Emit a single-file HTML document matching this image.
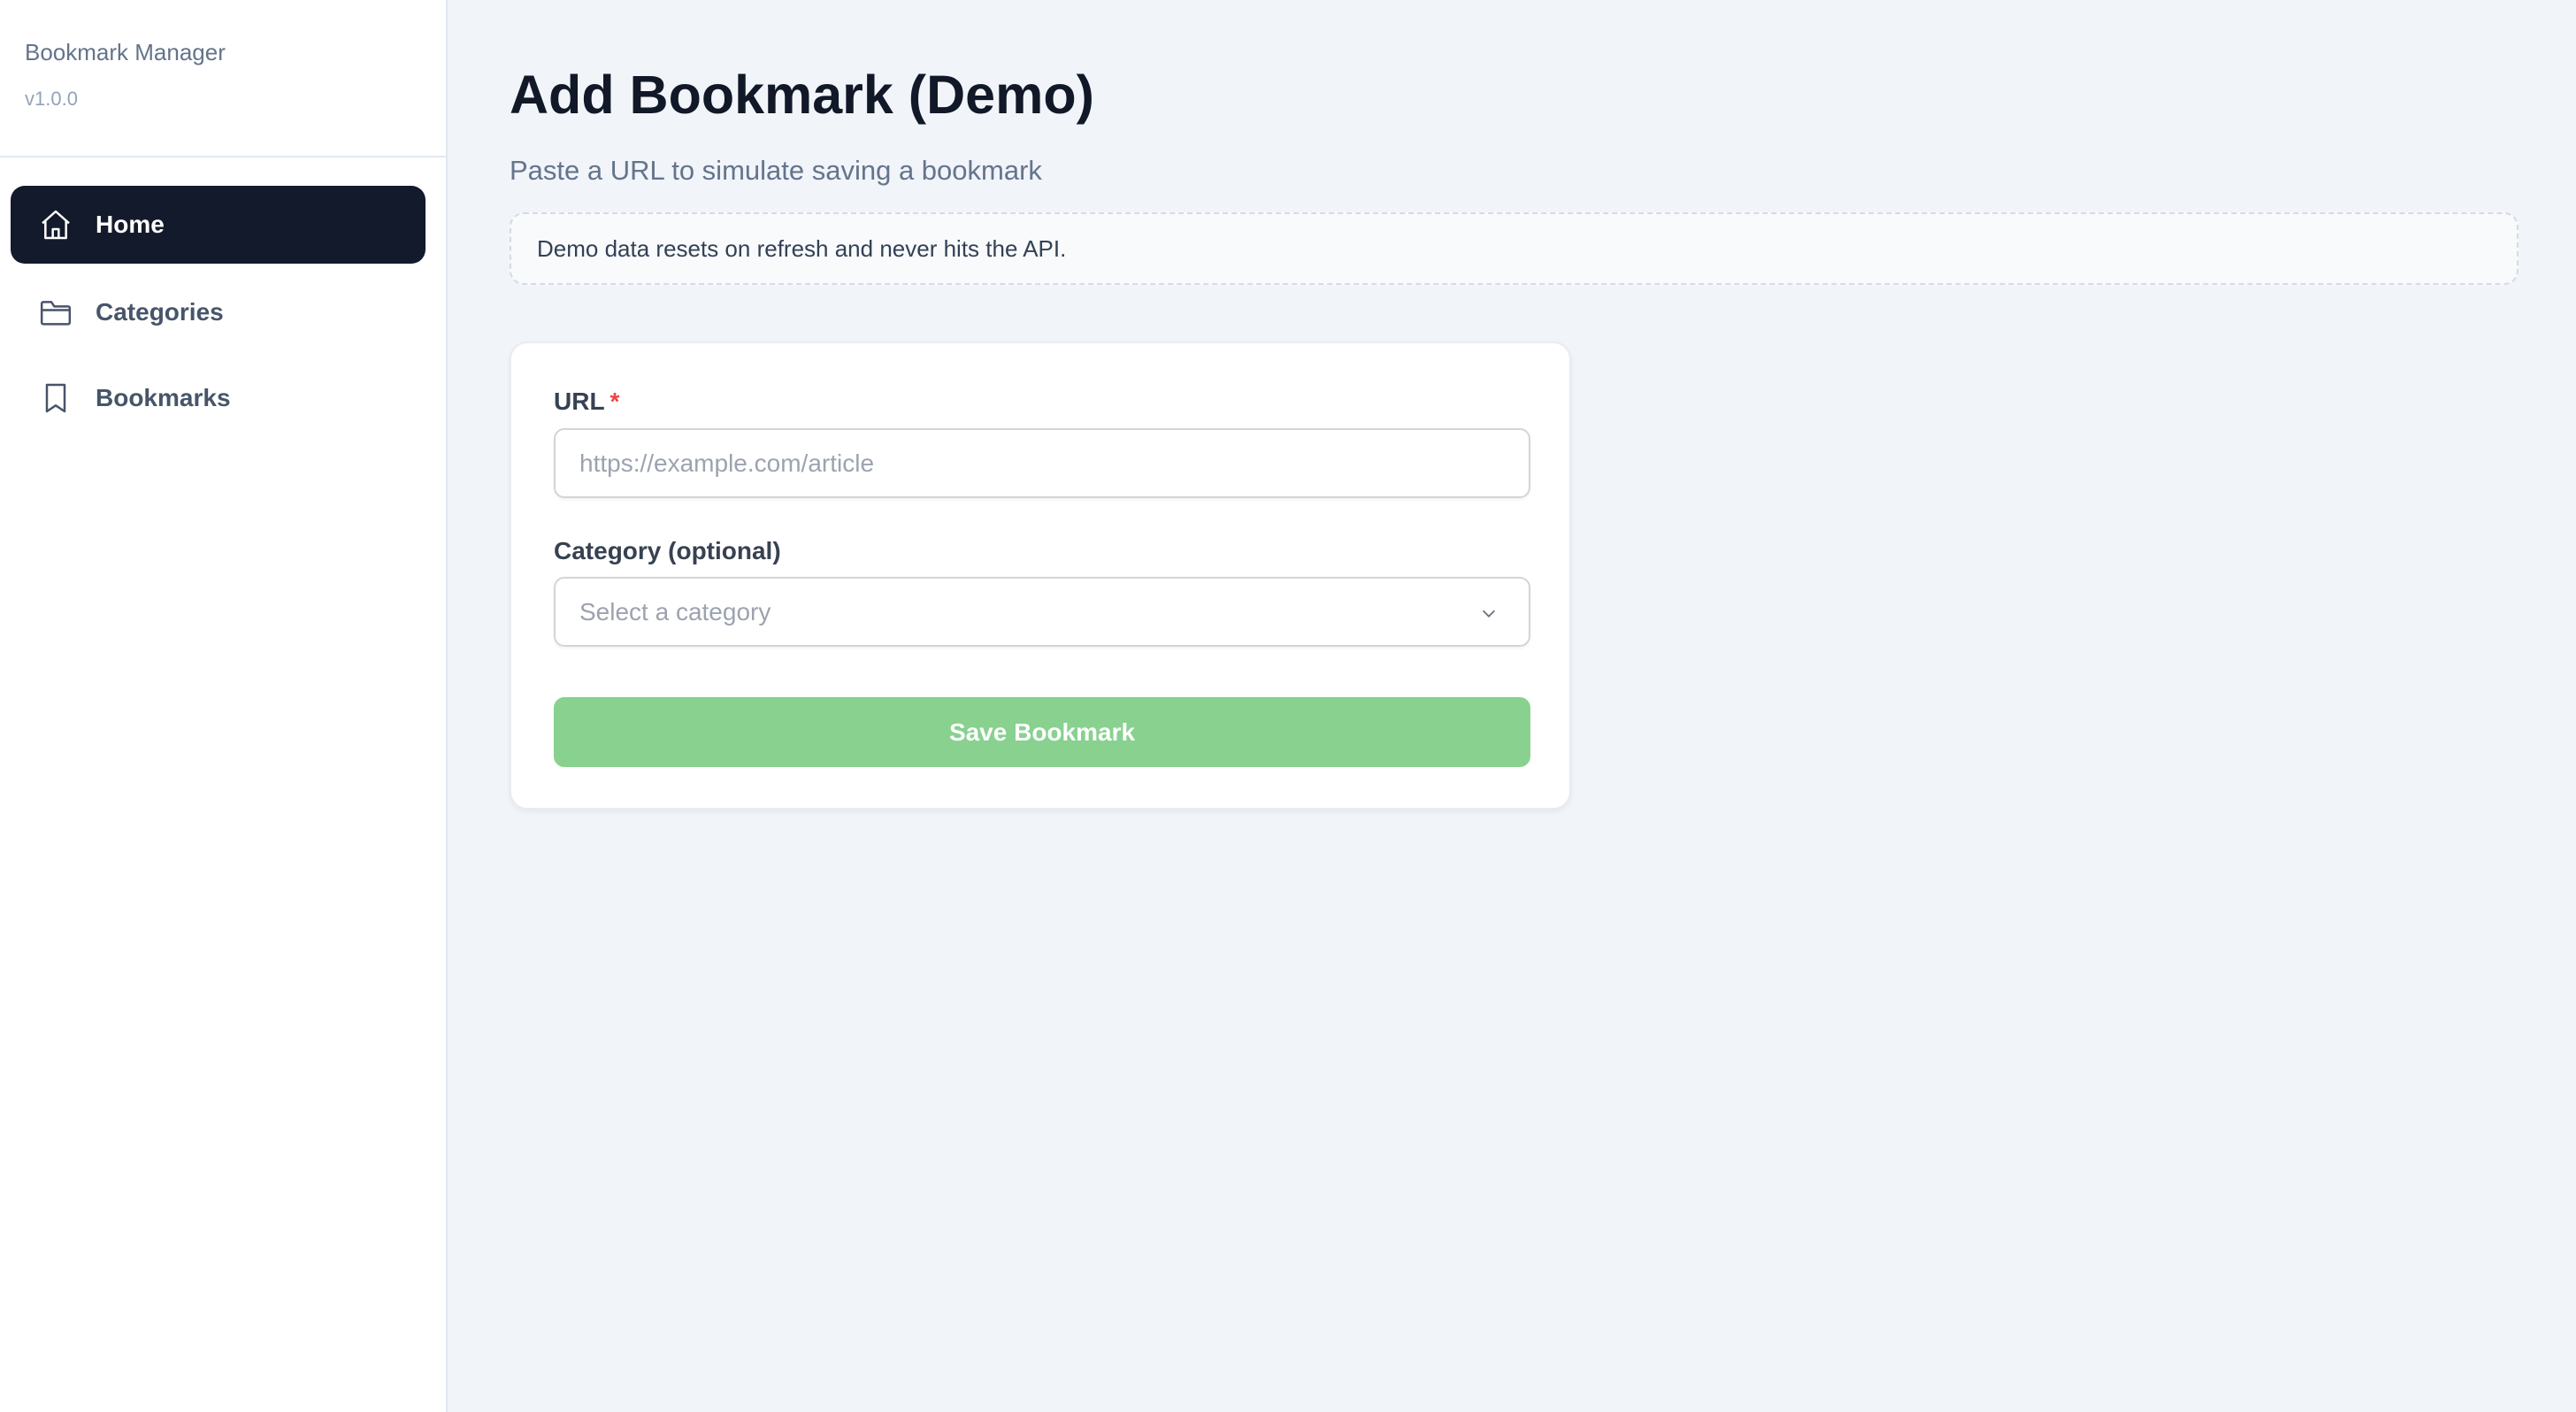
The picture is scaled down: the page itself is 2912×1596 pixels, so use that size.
<!DOCTYPE html>
<html><head><meta charset="utf-8"><style>
*{box-sizing:border-box;margin:0;padding:0}
body{width:2912px;height:1596px;background:#f1f4f9;font-family:"Liberation Sans",sans-serif;position:relative;overflow:hidden}
.side{position:absolute;left:0;top:0;width:506px;height:1596px;background:#fff;border-right:2px solid #e2e8f0}
.t1{position:absolute;left:28px;top:44px;font-size:26px;color:#64748b}
.t2{position:absolute;left:28px;top:99px;font-size:22px;color:#94a3b8}
.div{position:absolute;left:0;top:176px;width:504px;height:2px;background:#e2e8f0}
.nav{position:absolute;left:12px;width:469px;height:88px;border-radius:16px;display:flex;align-items:center;font-size:28px;color:#475569;font-weight:bold}
.nav svg{margin-left:31px;margin-right:25px}
.nav.act{background:#131a2b;color:#fff}
.title{position:absolute;left:576px;top:72px;font-size:61px;font-weight:bold;color:#111827}
.sub{position:absolute;left:576px;top:175px;font-size:31px;color:#64748b}
.note{position:absolute;left:576px;top:240px;width:2271px;height:82px;border:2px dashed #d5dbe4;background:#f8fafc;border-radius:16px;font-size:26px;color:#334155;padding-left:29px;line-height:78px}
.card{position:absolute;left:576px;top:386px;width:1200px;height:529px;background:#fff;border-radius:20px;border:2px solid #e8ecf2;box-shadow:0 3px 6px rgba(0,0,0,.05)}
.lab{position:absolute;left:48px;font-size:28px;color:#374151;font-weight:bold}
.inp{position:absolute;left:48px;width:1104px;height:79px;border:2px solid #d1d5db;border-radius:12px;font-size:28px;color:#9ca3af;padding-left:27px;line-height:75px;box-shadow:0 2px 3px rgba(0,0,0,.05)}
.btn{position:absolute;left:48px;top:400px;width:1104px;height:79px;background:#88d18f;border-radius:12px;color:#fff;font-size:28px;font-weight:bold;text-align:center;line-height:79px}
</style></head><body>
<div class="side">
<div class="t1">Bookmark Manager</div>
<div class="t2">v1.0.0</div>
<div class="div"></div>
<div class="nav act" style="top:210px"><svg width="40" height="40" viewBox="0 0 24 24" fill="none" stroke="#fff" stroke-width="1.5" stroke-linejoin="round"><path d="M3 11L12 3l9 8M5 9.5V21h14V9.5M10 21v-6h4v6"/></svg>Home</div>
<div class="nav" style="top:309px"><svg width="40" height="40" viewBox="0 0 24 24" fill="none" stroke="#475569" stroke-width="1.5" stroke-linejoin="round"><path d="M2.5 6.5V19a1 1 0 0 0 1 1h17a1 1 0 0 0 1-1V9a1 1 0 0 0-1-1H11L9 5H3.5a1 1 0 0 0-1 1zM2.5 10.5h19"/></svg>Categories</div>
<div class="nav" style="top:406px"><svg width="40" height="40" viewBox="0 0 24 24" fill="none" stroke="#475569" stroke-width="1.5" stroke-linejoin="round"><path d="M6 3h12v18l-6-4-6 4z"/></svg>Bookmarks</div>
</div>
<div class="title">Add Bookmark (Demo)</div>
<div class="sub">Paste a URL to simulate saving a bookmark</div>
<div class="note">Demo data resets on refresh and never hits the API.</div>
<div class="card">
<div class="lab" style="top:50px">URL<span style="color:#ef4444;margin-left:6px">*</span></div>
<div class="inp" style="top:96px">https://example.com/article</div>
<div class="lab" style="top:219px">Category (optional)</div>
<div class="inp" style="top:264px">Select a category<svg style="position:absolute;right:34px;top:28px" width="22" height="22" viewBox="0 0 24 24" fill="none" stroke="#6b7280" stroke-width="2"><path d="M5 9l7 7 7-7"/></svg></div>
<div class="btn">Save Bookmark</div>
</div>
</body></html>
